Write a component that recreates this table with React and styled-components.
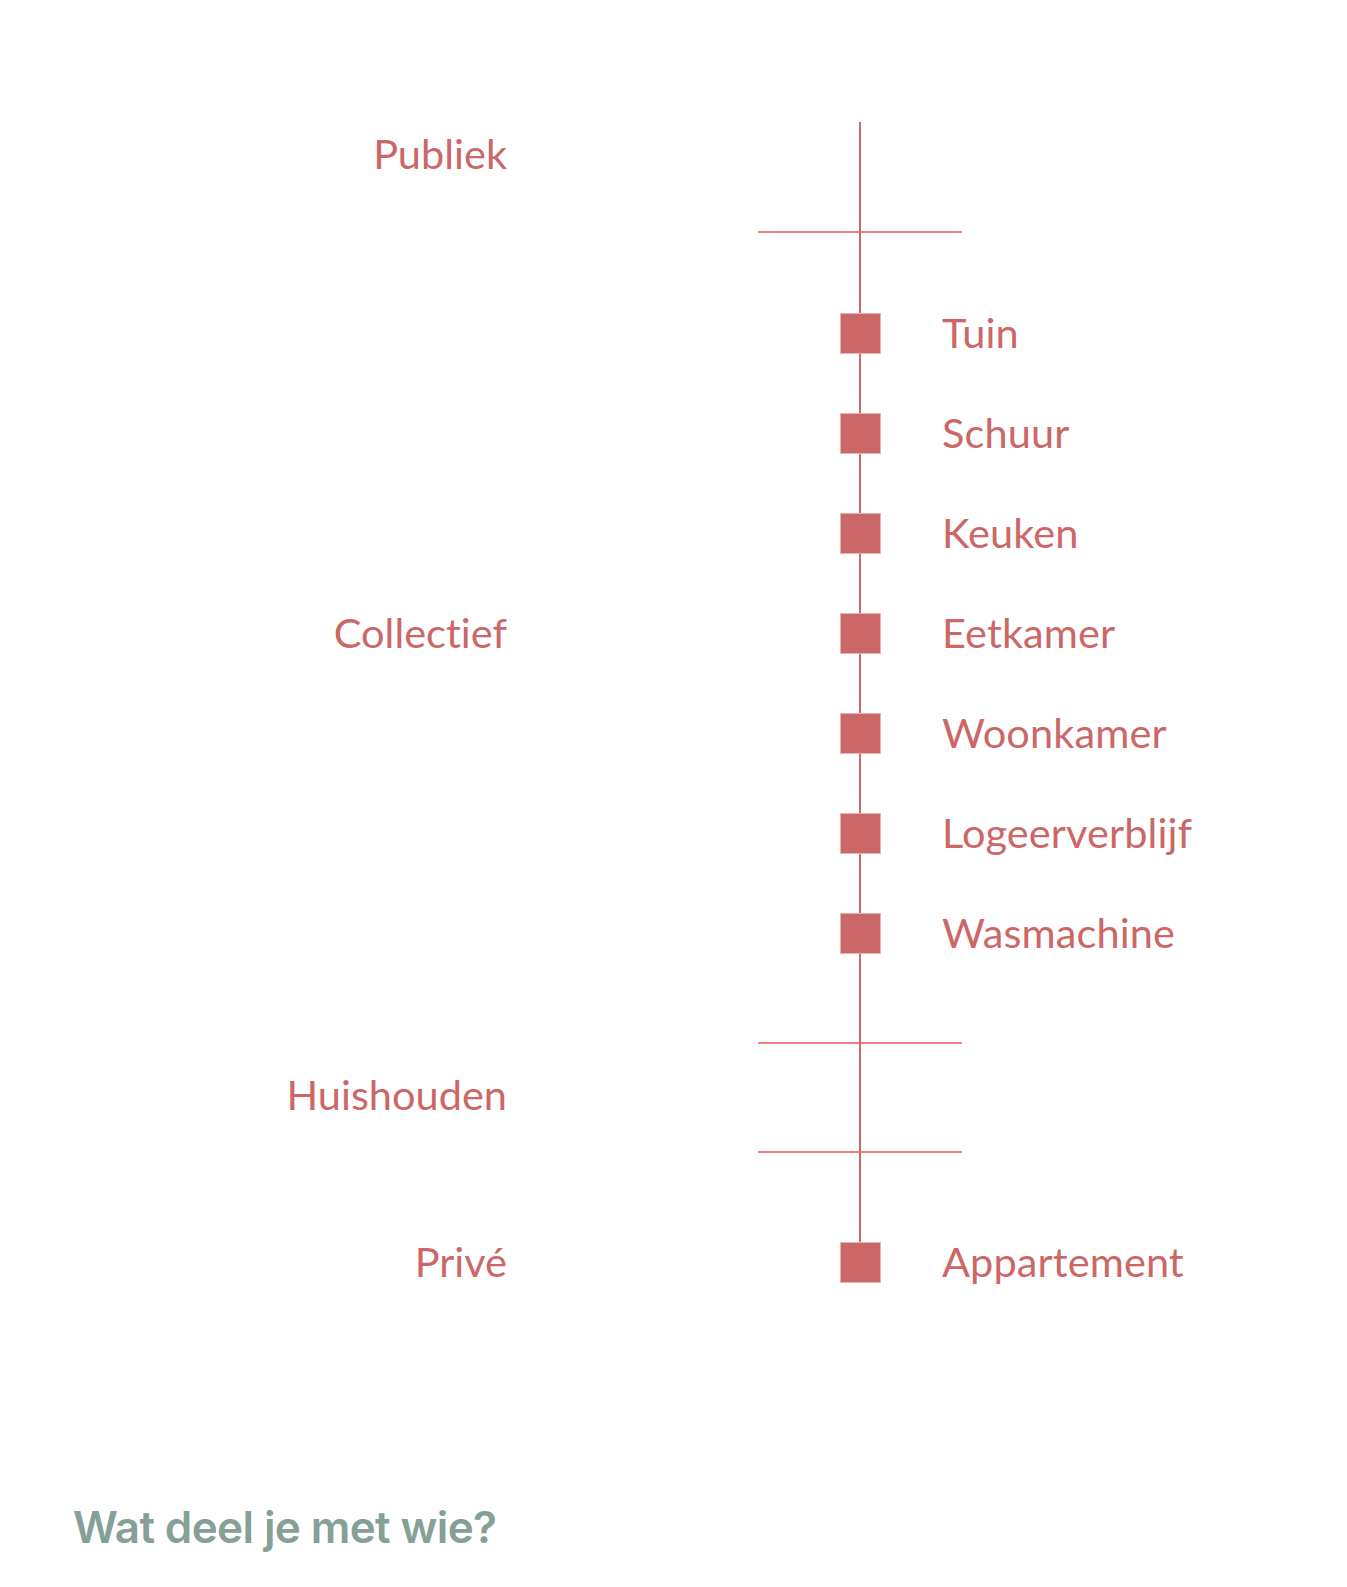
import React from "react";
import styled, { createGlobalStyle } from "styled-components";

const GlobalStyle = createGlobalStyle`
  html, body {
    margin: 0;
    padding: 0;
    background: #ffffff;
  }
  #root {
    width: 1347px;
    min-height: 1587px;
  }
`;

const Page = styled.main`
  width: 1347px;
  min-height: 1587px;
  padding-top: 122px;
  box-sizing: border-box;
  font-family: "Lato", "Open Sans", sans-serif;
  font-variant-ligatures: none;
`;

const Chart = styled.section`
  position: relative;
  &::before {
    content: "";
    position: absolute;
    left: 859px;
    width: 2px;
    top: 0;
    bottom: 50px;
    background: #cd6868;
  }
`;

const Section = styled.div`
  display: grid;
  grid-template-columns: 507px 1fr;
  align-items: center;
  min-height: ${(p) => p.$minHeight || 0}px;
  margin-top: ${(p) => p.$gap || 0}px;
`;

const ZoneLabel = styled.div`
  text-align: right;
  font-size: 41.5px;
  line-height: 1.2;
  color: #cc6767;
  margin-top: ${(p) => p.$shift || 0}px;
`;

const ItemList = styled.ul`
  list-style: none;
  margin: 0;
  padding: 0 0 0 333px;
`;

const Item = styled.li`
  display: flex;
  align-items: center;
  height: 100px;
`;

const Marker = styled.span`
  position: relative;
  z-index: 1;
  width: 41px;
  height: 41px;
  box-sizing: border-box;
  flex: none;
  background: #cc6767;
  border: 1px solid #e6b3af;
`;

const ItemLabel = styled.span`
  margin-left: 61px;
  font-size: 41.5px;
  line-height: 1.2;
  letter-spacing: 0.1px;
  color: #cc6767;
`;

const Divider = styled.hr`
  margin: ${(p) => p.$gap || 0}px 0 0 758px;
  width: 204px;
  height: 2px;
  border: 0;
  padding: 0;
  background: #f08080;
`;

const Title = styled.h1`
  margin: 188px 0 0;
  padding-left: 73px;
  font-family: "Inter", "Lato", sans-serif;
  font-weight: 600;
  font-size: 44px;
  line-height: 54px;
  letter-spacing: -0.014em;
  color: #85a097;
`;

const collective = [
  "Tuin",
  "Schuur",
  "Keuken",
  "Eetkamer",
  "Woonkamer",
  "Logeerverblijf",
  "Wasmachine",
];

export default function App() {
  return (
    <>
      <GlobalStyle />
      <Page>
        <Chart>
          <Section $minHeight={64}>
            <ZoneLabel>Publiek</ZoneLabel>
          </Section>
          <Divider $gap={45} />
          <Section $gap={50}>
            <ZoneLabel>Collectief</ZoneLabel>
            <ItemList>
              {collective.map((name) => (
                <Item key={name}>
                  <Marker />
                  <ItemLabel>{name}</ItemLabel>
                </Item>
              ))}
            </ItemList>
          </Section>
          <Divider $gap={59} />
          <Section $minHeight={107}>
            <ZoneLabel $shift={-6}>Huishouden</ZoneLabel>
          </Section>
          <Divider />
          <Section $gap={59}>
            <ZoneLabel>Privé</ZoneLabel>
            <ItemList>
              <Item>
                <Marker />
                <ItemLabel>Appartement</ItemLabel>
              </Item>
            </ItemList>
          </Section>
        </Chart>
        <Title>Wat deel je met wie?</Title>
      </Page>
    </>
  );
}
